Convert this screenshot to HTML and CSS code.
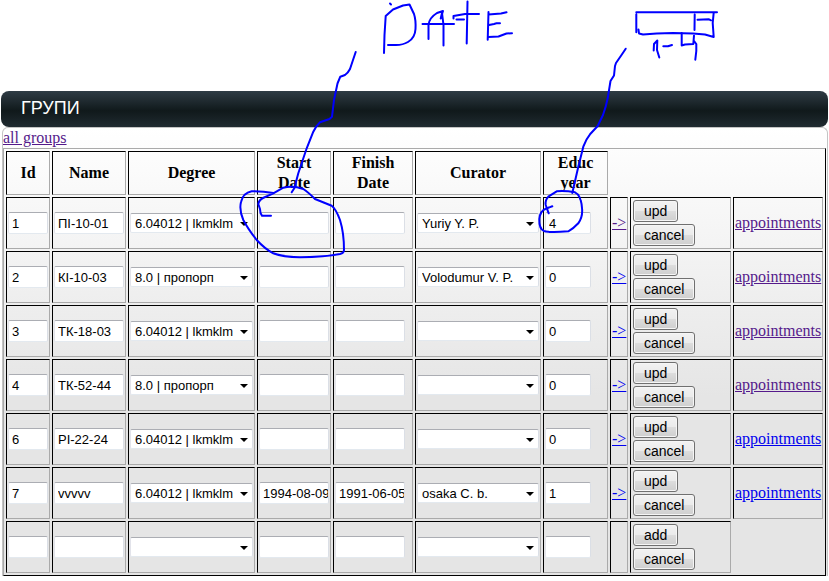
FILE: index.html
```
<!DOCTYPE html>
<html lang="uk">
<head>
<meta charset="utf-8">
<title>Групи</title>
<link rel="stylesheet" href="styles.css">
</head>
<body>
<main class="page">
<h1 class="bar">ГРУПИ</h1>
<section class="panel">
<a class="all visited" href="#all">all groups</a>
<table class="grid">
<colgroup><col class="c-id"><col class="c-name"><col class="c-degree"><col class="c-start"><col class="c-finish"><col class="c-curator"><col class="c-year"><col class="c-arrow"><col class="c-actions"><col class="c-app"></colgroup>
<thead>
<tr><th>Id</th><th>Name</th><th>Degree</th><th>Start<br>Date</th><th>Finish<br>Date</th><th>Curator</th><th>Educ<br>year</th></tr>
</thead>
<tbody id="rows"></tbody>
</table>
</section>
</main>
<svg class="ink" width="829" height="270" viewBox="0 0 829 270" aria-hidden="true">
<path d="M390 3.500L391 4.500"/>
<path d="M384 53L384.500 35L385.700 16L393 9.500L403 5.500L409.500 4.500L414 14Q416 20 415.500 29Q415 38 408 42Q403 45 396 45H388"/>
<path d="M428.500 39V25Q429 18 437 13L443 11L440.700 18.500L442 13L443.500 25V45.500M422.500 24H454"/>
<path d="M453.500 18.500V16L465 14H479M467.500 1.500L466.700 43.500M456.500 19.500H464"/>
<path d="M488.500 12L487.700 39.700M488.500 14.500L501 13.500L506.500 12.300M489 25L494 24L496.500 23.300H500M488.500 37L498.500 36.500L506.500 33.500L512 33.300"/>
<path d="M355.700 52L353 60L350 69Q348 73 345 75L340.300 76.700L337.500 83.500L334 100L332 116.700L329.500 119L320 122.300Q316 126 313.300 131.700L306.700 148.300L298.300 173.300L294.300 188.300L291.700 192.300"/>
<path d="M271 215.700H262L260.500 213L260 209L258.300 204Q259 200 263 198L273.300 193.300L283.300 187.700Q293 185.500 303.300 189Q308 192 315 199L331.700 205.700Q336 209 340 220Q344 233 344 250Q344 253 340 254Q325 257 300 257.300Q283 257 273.300 253.300Q265 249 256.700 240Q248 229 243.300 220Q239 210 241 202Q243 193 251.700 191.300Q262 191 273.300 193"/>
<path d="M636.300 12.300H717M636.300 14.300V32.300M638.500 29.500L639 33.500L643 34.500L656.700 33.500L673 33L693 33.500L705 34.500L713.700 37L712.700 23L713.700 12.700M694.700 14.500L694.500 30M697.500 19.700L709 19.300L711 20.300"/>
<path d="M653.700 50.500L654 44L657.300 40.500L657 50L659.300 57.500M663.300 46.300H668L672 45M681.700 33V45.500L685 44.500L693.300 44L694 35.700M693.700 40.700L696.300 44V51L695.300 59.700"/>
<path d="M625.700 48.700L621 55.700L616 63L615 66L614 75.500L610.500 81L607.700 98.300Q606 107 603 115L597.700 126L590 134.300Q586 139 583.300 146.700L578.300 166.700L572.300 193"/>
<path d="M552.300 206.300L545.700 208.700Q540 211 539.300 219Q539 229 544 231Q550 233 568.300 231.300Q573 229 578.300 223.300Q583 217 582 208Q581 195 575 192.300Q565 190.500 556.700 191.300L548.300 196.700Q545 200 545.700 205L548.700 213.300"/>
</svg>
<script src="rows.js"></script>
</body>
</html>
```
FILE: rows.js
```
const master = "6.04012 | lkmklm";
const other = "8.0 | пропорп";
const groups = [
  { id: "1", name: "ПІ-10-01", degree: master, curator: "Yuriy Y. P.", year: "4", seen: true, arrowSeen: true },
  { id: "2", name: "КІ-10-03", degree: other, curator: "Volodumur V. P.", year: "0", seen: true },
  { id: "3", name: "ТК-18-03", degree: master, year: "0", seen: true },
  { id: "4", name: "ТК-52-44", degree: other, year: "0", seen: true },
  { id: "6", name: "РІ-22-24", degree: master, year: "0" },
  { id: "7", name: "vvvvv", degree: master, start: "1994-08-09", finish: "1991-06-05", curator: "osaka C. b.", year: "1" },
  { blank: true }
];
const input = (label, cls, value = "") =>
  `<td><input class="field ${cls}" type="text" aria-label="${label}" value="${value}"></td>`;
const select = (label, value = "") =>
  `<td><span class="pick"><select aria-label="${label}"><option>${value}</option></select></span></td>`;
const link = (text, seen) => `<a href="#open"${seen ? ' class="visited"' : ""}>${text}</a>`;

document.getElementById("rows").innerHTML = groups.map(g => `<tr>
${input("Id", "short", g.id)}
${input("Name", "", g.name)}
${select("Degree", g.degree)}
${input("Start date", "", g.start)}
${input("Finish date", "", g.finish)}
${select("Curator", g.curator)}
${input("Educ year", "year", g.year)}
<td>${g.blank ? "" : link("-&gt;", g.arrowSeen)}</td>
<td><div class="actions"><button type="button">${g.blank ? "add" : "upd"}</button><button type="button">cancel</button></div></td>
${g.blank ? "" : `<td>${link("appointments", g.seen)}</td>`}
</tr>`).join("");
```
FILE: styles.css
```
body {
  margin: 0;
  background: #fff;
  color: #000;
  font: 16px/20px "Liberation Serif", serif;
}
.page {
  padding: 91px 1px 4px;
}
.bar {
  margin: 0;
  padding: 0 20px 2px;
  border-radius: 8px;
  background: linear-gradient(#2f3c45, #10191b 55%, #202b31);
  color: #fff;
  font: 18px/34px "Liberation Sans", sans-serif;
}
.panel {
  margin: 0 0 0 1px;
  border: 1px solid #c4c4c4;
  border-bottom-width: 0;
  border-radius: 6px 6px 0 0;
  background: linear-gradient(#fff, #e5e5e5 60%);
}
.all {
  display: block;
  width: fit-content;
}
a {
  color: #00e;
  white-space: nowrap;
}
.visited {
  color: #551a8b;
}
.grid {
  width: calc(100% - 1px);
  table-layout: fixed;
  border: 1px solid;
  border-color: #aaa #000 #000 #aaa;
  border-spacing: 2px;
}
.c-id { width: 44px; }
.c-name, .c-start { width: 74px; }
.c-degree { width: 127px; }
.c-finish { width: 80px; }
.c-curator { width: 126px; }
.c-year { width: 65px; }
.c-arrow { width: 18px; }
.c-actions { width: 101px; }
.c-app { width: 90px; }
th, td {
  padding: 1px;
  border: 1px solid;
  border-color: #000 #aaa #aaa #000;
}
.field, .pick select {
  box-sizing: border-box;
  border: 1px solid;
  border-color: #abadb3 #dbdfe6 #e3e9ef #e2e3ea;
  border-radius: 2px;
  background: #fff;
  color: #000;
  font: 13px "Liberation Sans", sans-serif;
}
.field {
  display: block;
  width: 70px;
  height: 22px;
  padding: 0 0 0 3px;
}
.short { width: 40px; }
.year { width: 46px; }
.pick {
  display: block;
  position: relative;
}
.pick select {
  display: block;
  appearance: none;
  width: 100%;
  height: 20px;
  padding: 0 4px;
}
.pick::after {
  content: "";
  position: absolute;
  right: 5px;
  top: 9px;
  width: 8px;
  height: 4px;
  background: #000;
  clip-path: polygon(0 0, 100% 0, 50% 100%);
  pointer-events: none;
}
.actions {
  display: flex;
  flex-direction: column;
  align-items: flex-start;
  gap: 2px;
  padding: 1px;
}
button {
  height: 22px;
  padding: 0 10px;
  border: 1px solid #707070;
  border-radius: 3px;
  background: linear-gradient(#f2f2f2, #ebebeb 50%, #ddd 50%, #cfcfcf);
  box-shadow: inset 0 0 0 1px #f6f6f6;
  color: #000;
  font: 14px "Liberation Sans", sans-serif;
}
.ink {
  position: absolute;
  top: 0;
  left: 0;
  fill: none;
  stroke: #00f;
  stroke-width: 2;
  stroke-linecap: round;
  stroke-linejoin: round;
  pointer-events: none;
}
```
